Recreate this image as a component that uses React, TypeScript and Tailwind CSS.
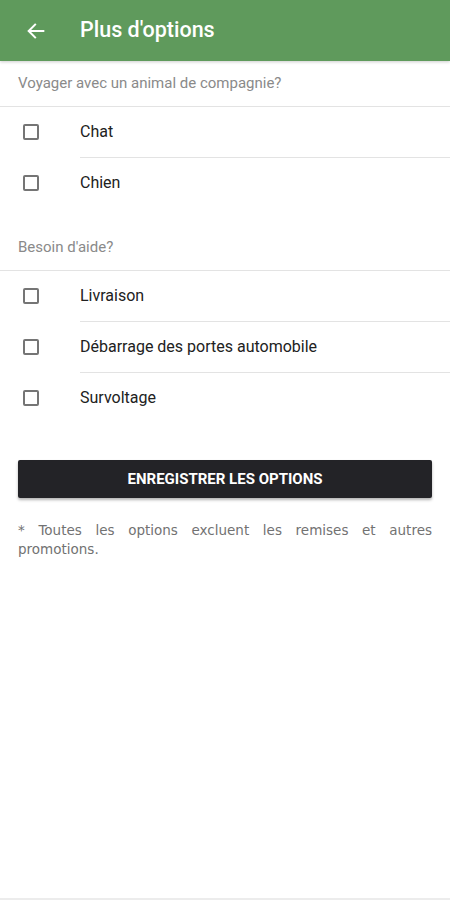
import React from "react";

function Checkbox() {
  return <div className="w-[16px] h-[16px] border-2 border-[#757575] rounded-[2px] shrink-0" />;
}

function Row({ label, divider }: { label: string; divider: boolean }) {
  return (
    <div className="flex flex-col">
      <div className="flex items-center h-[50px]">
        <div className="w-[80px] pl-[23px] flex items-center">
          <Checkbox />
        </div>
        <span className="text-[16px] text-[#212121]">{label}</span>
      </div>
      {divider && <div className="ml-[80px] h-px bg-[#e3e3e3]" />}
    </div>
  );
}

function Section({ title, items }: { title: string; items: string[] }) {
  return (
    <div className="flex flex-col">
      <div className="h-[45px] flex items-center pl-[18px] text-[15px] text-[#8a8a8a]">{title}</div>
      <div className="h-px bg-[#e3e3e3]" />
      {items.map((it, i) => (
        <Row key={it} label={it} divider={i < items.length - 1} />
      ))}
    </div>
  );
}

export default function App() {
  return (
    <div className="w-[450px] h-[900px] bg-white flex flex-col relative" style={{ fontFamily: "Roboto, 'Liberation Sans', sans-serif" }}>
      <div className="h-[61px] bg-[#5f9a5c] flex items-center shrink-0 shadow-[0_1px_3px_rgba(0,0,0,0.2)]">
        <div className="w-[80px] pl-[25px] flex items-center">
          <svg width="22" height="22" viewBox="0 0 24 24" fill="none" stroke="white" strokeWidth="2.2" strokeLinecap="square">
            <path d="M20 12H4.5M11 5l-7 7 7 7" />
          </svg>
        </div>
        <span className="text-white text-[21.5px] font-medium">Plus d'options</span>
      </div>
      <Section title="Voyager avec un animal de compagnie?" items={["Chat", "Chien"]} />
      <div className="h-[17px]" />
      <Section title="Besoin d'aide?" items={["Livraison", "Débarrage des portes automobile", "Survoltage"]} />
      <div className="px-[18px] mt-[37px]">
        <button className="w-full h-[38px] bg-[#232327] text-white text-[15px] font-bold rounded-[2px] shadow-[0_2px_3px_rgba(0,0,0,0.3)]">
          ENREGISTRER LES OPTIONS
        </button>
      </div>
      <p
        className="px-[18px] mt-[23px] text-[13.5px] leading-[19px] text-[#727272] text-justify"
        style={{ fontFamily: "'DejaVu Sans', 'Liberation Sans', sans-serif" }}
      >
        * Toutes les options excluent les remises et autres promotions.
      </p>
      <div className="absolute bottom-0 left-0 right-0 h-[2px] bg-[#ececec]" />
    </div>
  );
}
